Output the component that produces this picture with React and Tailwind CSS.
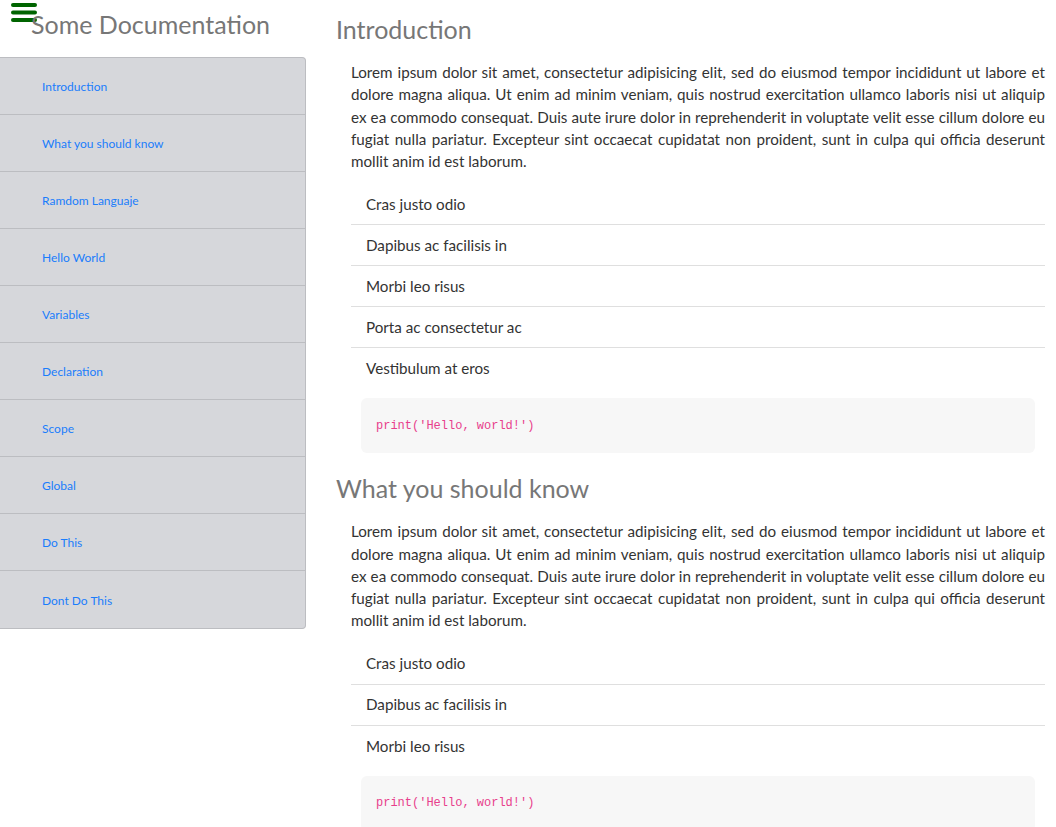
const navItems = [
  'Introduction',
  'What you should know',
  'Ramdom Languaje',
  'Hello World',
  'Variables',
  'Declaration',
  'Scope',
  'Global',
  'Do This',
  'Dont Do This',
];

// the lorem paragraph, broken where the reference breaks it
const loremLines = [
  'Lorem ipsum dolor sit amet, consectetur adipisicing elit, sed do eiusmod tempor incididunt ut labore et',
  'dolore magna aliqua. Ut enim ad minim veniam, quis nostrud exercitation ullamco laboris nisi ut aliquip',
  'ex ea commodo consequat. Duis aute irure dolor in reprehenderit in voluptate velit esse cillum dolore eu',
  'fugiat nulla pariatur. Excepteur sint occaecat cupidatat non proident, sunt in culpa qui officia deserunt',
  'mollit anim id est laborum.',
];

const sections = [
  {
    title: 'Introduction',
    items: ['Cras justo odio', 'Dapibus ac facilisis in', 'Morbi leo risus', 'Porta ac consectetur ac', 'Vestibulum at eros'],
  },
  {
    title: 'What you should know',
    items: ['Cras justo odio', 'Dapibus ac facilisis in', 'Morbi leo risus'],
  },
];

function Hamburger() {
  return (
    <svg width="26" height="20" viewBox="0 0 26 20" className="absolute left-[11px] top-[3px]">
      <rect x="0" y="0" width="26" height="4" rx="2" fill="#006400" />
      <rect x="0" y="7.5" width="26" height="4" rx="2" fill="#006400" />
      <rect x="0" y="15" width="26" height="4" rx="2" fill="#006400" />
    </svg>
  );
}

function Section({ title, items }) {
  return (
    <section>
      <h2 className="h-[59px] flex items-center text-[25px] text-[#777777] leading-none">{title}</h2>
      <p className="ml-[15px] mr-[11px] text-[15.2px] leading-[22.25px] text-[#333333] mt-[2px]">
        {loremLines.map((line, i) => (
          <span
            key={i}
            className={
              'block whitespace-nowrap ' +
              (i < loremLines.length - 1 ? 'text-justify [text-align-last:justify]' : '')
            }
          >
            {line}
          </span>
        ))}
      </p>
      <ul className="ml-[15px] mr-[11px] mt-[12px]">
        {items.map((item, i) => (
          <li
            key={i}
            className={
              'h-[41px] flex items-center pl-[15px] text-[15.2px] text-[#333333] ' +
              (i < items.length - 1 ? 'border-b border-[#dfdfdf]' : '')
            }
          >
            {item}
          </li>
        ))}
      </ul>
      <pre className="ml-[25px] mr-[21px] mt-[9px] mb-[6px] h-[55px] flex items-center px-[15px] bg-[#f7f7f7] rounded-[6px] font-['Liberation_Mono',monospace] text-[12px] text-[#e83e8c]">
        print('Hello, world!')
      </pre>
    </section>
  );
}

export default function App() {
  return (
    <div className="flex w-[1056px] h-[827px] overflow-hidden bg-white font-['Lato',sans-serif]">
      <aside className="w-[306px] shrink-0">
        <div className="relative h-[57px]">
          <Hamburger />
          <h1 className="absolute left-[31px] top-[12px] text-[25px] leading-none text-[#777777]">Some Documentation</h1>
        </div>
        <nav className="bg-[#d6d7db] border border-l-0 border-[#bcbdc1] rounded-r-[4px]">
          {navItems.map((item, i) => (
            <div
              key={item}
              className={
                'h-[57px] flex items-center pl-[42px] pt-[2px] ' +
                (i < navItems.length - 1 ? 'border-b border-[#bcbdc1]' : '')
              }
            >
              <a href="#" className="text-[12px] text-[#1a7dfc]">{item}</a>
            </div>
          ))}
        </nav>
      </aside>
      <main className="flex-1 pl-[30px]">
        {sections.map((s) => (
          <Section key={s.title} {...s} />
        ))}
      </main>
    </div>
  );
}
